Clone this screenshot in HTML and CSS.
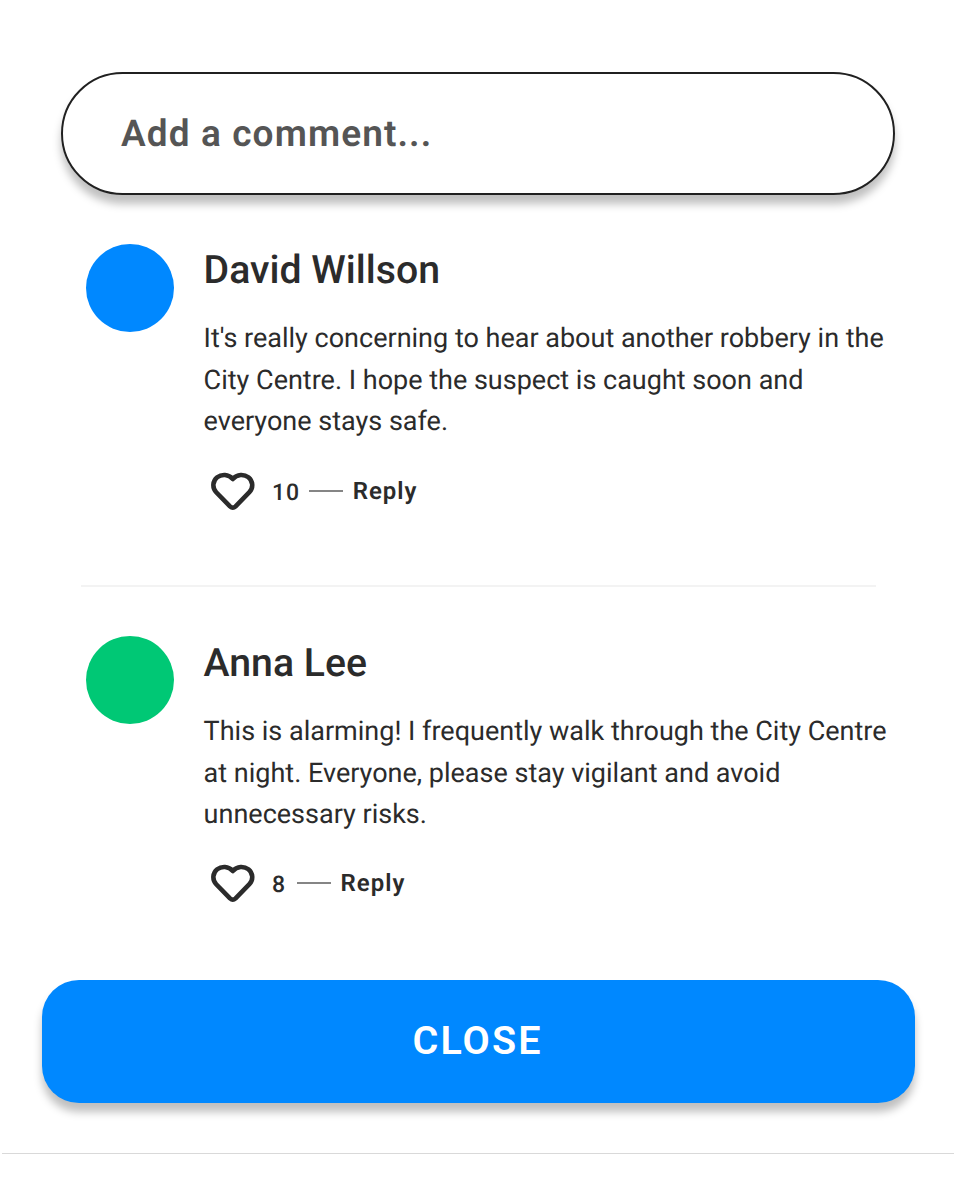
FILE: index.html
```html
<!DOCTYPE html>
<html lang="en">
<head>
<meta charset="utf-8">
<title>Comments</title>
<link rel="stylesheet" href="styles.css">
</head>
<body>
<main class="panel">
  <div class="field">Add a comment...</div>
  <section class="comments">
    <article class="comment">
      <div class="avatar avatar-blue"></div>
      <div class="body">
        <h2 class="name">David Willson</h2>
        <p class="text">It's really concerning to hear about another robbery in the<br>City Centre. I hope the suspect is caught soon and<br>everyone stays safe.</p>
        <div class="actions">
          <svg class="heart" viewBox="0 0 44 40"><path d="M21.8 8 C17.5 2.9 10.5 3 6.2 6.3 C1.6 10 1 16.7 5.2 21.2 L19 35.4 Q21.8 38 24.6 35.4 L38.4 21.2 C42.6 16.7 42 10 37.4 6.3 C33.1 3 26.1 2.9 21.8 8 Z"/></svg>
          <span class="count">10</span><span class="dash"></span><span class="reply">Reply</span>
        </div>
      </div>
    </article>
    <hr class="divider">
    <article class="comment">
      <div class="avatar avatar-green"></div>
      <div class="body">
        <h2 class="name">Anna Lee</h2>
        <p class="text">This is alarming! I frequently walk through the City Centre<br>at night. Everyone, please stay vigilant and avoid<br>unnecessary risks.</p>
        <div class="actions">
          <svg class="heart" viewBox="0 0 44 40"><path d="M21.8 8 C17.5 2.9 10.5 3 6.2 6.3 C1.6 10 1 16.7 5.2 21.2 L19 35.4 Q21.8 38 24.6 35.4 L38.4 21.2 C42.6 16.7 42 10 37.4 6.3 C33.1 3 26.1 2.9 21.8 8 Z"/></svg>
          <span class="count">8</span><span class="dash dash-wide"></span><span class="reply">Reply</span>
        </div>
      </div>
    </article>
  </section>
  <button class="close">CLOSE</button>
  <hr class="bottom-line">
</main>
</body>
</html>
```
FILE: styles.css
```css
* { box-sizing: border-box; }
body { margin: 0; background: #fff; color: #2b2b2b; font-family: Roboto, "Liberation Sans", sans-serif; text-rendering: geometricPrecision; }
.panel { display: flex; flex-direction: column; height: 1181px; padding-top: 72px; }
.field { margin: 0 62px 0 61px; height: 123px; border: 2px solid #202020; border-radius: 62px; padding-left: 58px; line-height: 121px; font-size: 37px; font-weight: 600; letter-spacing: 1.1px; color: #555; box-shadow: 0 9px 9px rgba(0,0,0,.25); }
.comments { margin: 49px 62px 0 86px; }
.comment { display: flex; gap: 30px; height: 341px; }
.comment:last-child { height: 344px; }
.comment:last-child .body { padding-top: 1px; }
.comment:last-child .actions { margin-top: 24px; }
.avatar { width: 88px; height: 88px; border-radius: 50%; flex: none; }
.avatar-blue { background: #0088ff; }
.avatar-green { background: #00c875; }
.name { margin: 0 0 0 -.4px; padding-top: 1px; font-size: 39.2px; line-height: 50px; font-weight: 500; white-space: nowrap; }
.text { margin: 23px 0 0 -.4px; font-size: 27px; line-height: 41.7px; white-space: nowrap; }
.actions { display: flex; align-items: center; margin: 25px 0 0 7px; height: 46px; font-size: 24px; font-weight: 600; letter-spacing: 1px; }
.heart { width: 44px; height: 40px; margin-right: 17px; fill: none; stroke: #2b2b2b; stroke-width: 4.6; stroke-linejoin: round; }
.count { font-size: 23px; font-weight: 500; padding-top: 3px; }
.dash { width: 34px; height: 2px; background: #858585; margin: 0 9.5px 0 9px; }
.dash-wide { margin-left: 11px; }
.divider { width: 795px; height: 2px; margin: 0 0 49px -5px; border: 0; background: #f3f3f3; }
.close { width: 873px; height: 123px; margin: 0 0 0 42px; padding: 0 2px 3px 0; border: 0; border-radius: 37px; background: #0088ff; color: #fff; font: 600 39.5px Roboto, sans-serif; letter-spacing: 2.1px; box-shadow: 0 9px 9px rgba(0,0,0,.25); }
.bottom-line { width: 952px; height: 1px; margin: 50px 0 0 2px; border: 0; background: #d9d9d9; }
```
